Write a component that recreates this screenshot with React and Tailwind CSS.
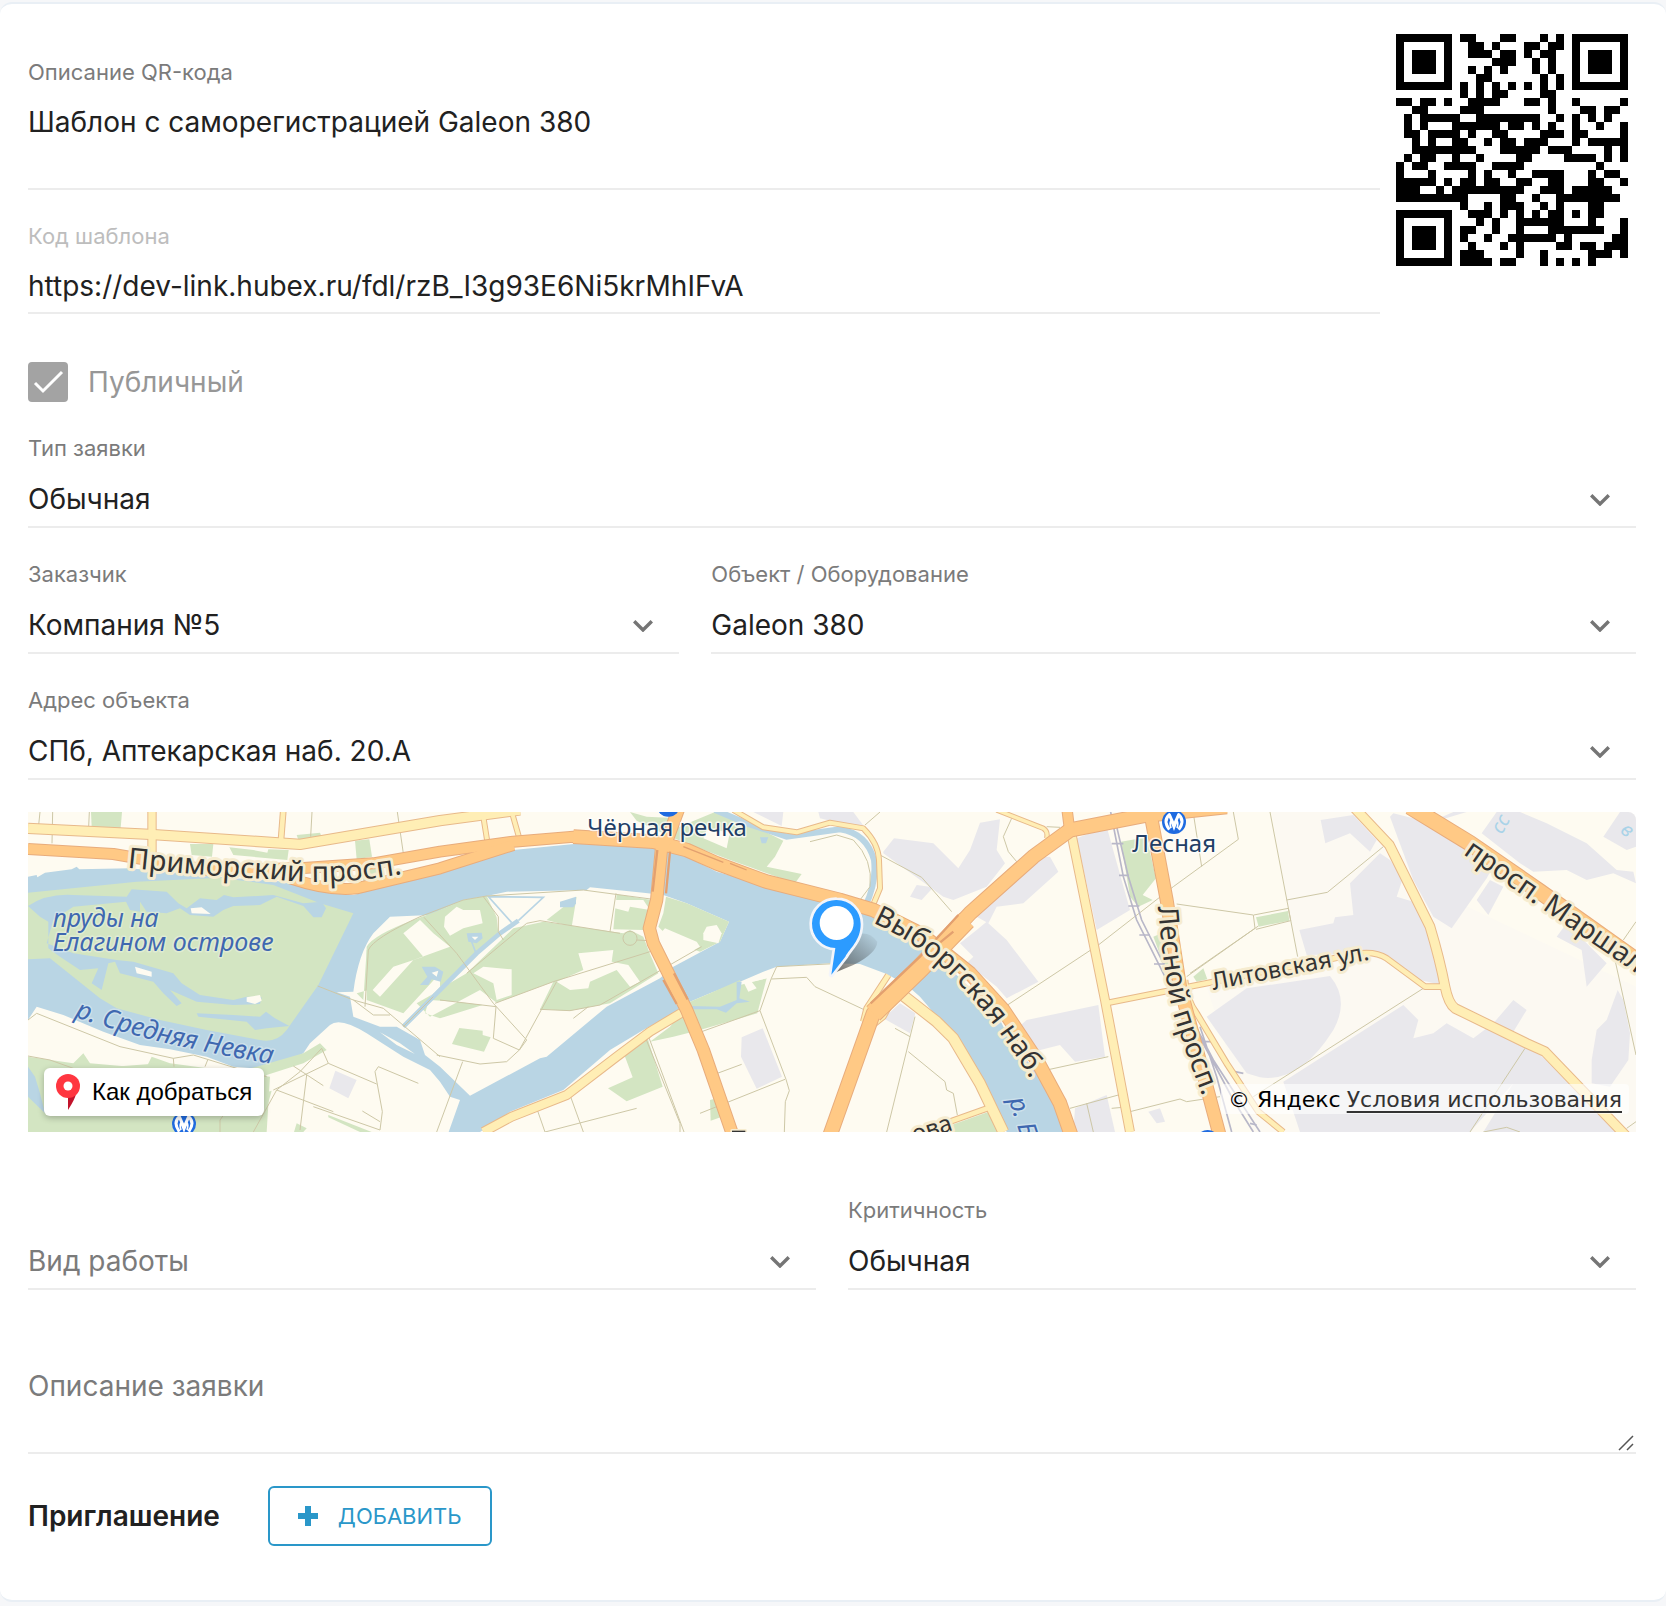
import React from "react";

const QR_SIZE = 29;

function gfMul(a, b) {
  let z = 0;
  for (let i = 7; i >= 0; i--) {
    z = (z << 1) ^ ((z >> 7) * 0x11d);
    z ^= ((b >> i) & 1) * a;
  }
  return z;
}

// Version 3, level L, byte mode, mask 6.
function qrMatrix(text) {
  const size = QR_SIZE;
  const dataLen = 55;
  const ecLen = 15;
  const bits = [];
  const push = (v, n) => {
    for (let i = n - 1; i >= 0; i--) bits.push((v >> i) & 1);
  };
  push(4, 4);
  push(text.length, 8);
  for (const ch of text) push(ch.charCodeAt(0), 8);
  push(0, 4);
  const data = [];
  for (let i = 0; i < bits.length; i += 8) data.push(parseInt(bits.slice(i, i + 8).join(""), 2));
  for (let p = 0xec; data.length < dataLen; p ^= 0xec ^ 0x11) data.push(p);

  const gen = new Array(ecLen).fill(0);
  gen[ecLen - 1] = 1;
  let root = 1;
  for (let i = 0; i < ecLen; i++) {
    for (let j = 0; j < ecLen; j++) {
      gen[j] = gfMul(gen[j], root);
      if (j + 1 < ecLen) gen[j] ^= gen[j + 1];
    }
    root = gfMul(root, 2);
  }
  const ec = new Array(ecLen).fill(0);
  for (const b of data) {
    const f = b ^ ec.shift();
    ec.push(0);
    gen.forEach((c, i) => (ec[i] ^= gfMul(c, f)));
  }
  const all = data.concat(ec);

  const m = Array.from({ length: size }, () => new Array(size).fill(0));
  const fixed = Array.from({ length: size }, () => new Array(size).fill(false));
  const set = (x, y, v) => {
    if (x < 0 || y < 0 || x >= size || y >= size) return;
    m[y][x] = v ? 1 : 0;
    fixed[y][x] = true;
  };
  for (let i = 0; i < size; i++) {
    set(6, i, i % 2 === 0);
    set(i, 6, i % 2 === 0);
  }
  for (const [cx, cy] of [[3, 3], [size - 4, 3], [3, size - 4]])
    for (let dy = -4; dy <= 4; dy++)
      for (let dx = -4; dx <= 4; dx++) {
        const d = Math.max(Math.abs(dx), Math.abs(dy));
        set(cx + dx, cy + dy, d !== 2 && d !== 4);
      }
  for (let dy = -2; dy <= 2; dy++)
    for (let dx = -2; dx <= 2; dx++) set(22 + dx, 22 + dy, Math.max(Math.abs(dx), Math.abs(dy)) !== 1);

  const format = 0b110110001000001;
  const bit = (i) => (format >> i) & 1;
  for (let i = 0; i <= 5; i++) set(8, i, bit(i));
  set(8, 7, bit(6));
  set(8, 8, bit(7));
  set(7, 8, bit(8));
  for (let i = 9; i < 15; i++) set(14 - i, 8, bit(i));
  for (let i = 0; i < 8; i++) set(size - 1 - i, 8, bit(i));
  for (let i = 8; i < 15; i++) set(8, size - 15 + i, bit(i));
  set(8, size - 8, 1);

  let k = 0;
  for (let right = size - 1; right >= 1; right -= 2) {
    if (right === 6) right = 5;
    for (let v = 0; v < size; v++)
      for (let j = 0; j < 2; j++) {
        const x = right - j;
        const y = ((right + 1) & 2) === 0 ? size - 1 - v : v;
        if (fixed[y][x]) continue;
        const b = k < all.length * 8 ? (all[k >> 3] >> (7 - (k & 7))) & 1 : 0;
        k++;
        m[y][x] = b ^ ((((x * y) % 2) + ((x * y) % 3)) % 2 === 0 ? 1 : 0);
      }
  }
  return m;
}

function QrCode({ text }) {
  const d = qrMatrix(text)
    .map((row, y) => row.map((v, x) => (v ? `M${x} ${y}h1v1h-1z` : "")).join(""))
    .join("");
  return (
    <svg viewBox="0 0 29 29" shapeRendering="crispEdges" className="size-[232px]" role="img" aria-label="QR-код">
      <path d={d} />
    </svg>
  );
}

const LABEL = "block h-7 text-[22px] leading-7 text-[#7b7b7b]";
const VALUE =
  "block w-full rounded-none border-b-2 border-[#ececec] bg-transparent text-[28px] leading-9 outline-none";

function TextField({ id, label, muted, children }) {
  return (
    <div>
      <label htmlFor={id} className={muted ? "block h-7 text-[22px] leading-7 text-[#bdbdbd]" : LABEL}>
        {label}
      </label>
      {children}
    </div>
  );
}

function SelectField({ id, label, value, placeholder, className = "" }) {
  return (
    <div className={className}>
      {placeholder ? <div className="h-7" /> : (
        <label htmlFor={id} className={LABEL}>
          {label}
        </label>
      )}
      <div className="relative mt-[18px]">
        <select
          id={id}
          aria-label={placeholder ? value : undefined}
          className={
            VALUE + " h-12 appearance-none pb-2 pr-16 " + (placeholder ? "text-[#7b7b7b]" : "text-[#212121]")
          }
        >
          <option>{value}</option>
        </select>
        <svg
          viewBox="0 0 20 12"
          className="pointer-events-none absolute right-[26px] top-3.5 h-3 w-5 fill-none stroke-[#757575]"
          strokeWidth="3.4"
        >
          <path d="M1.2 1.2 10 10l8.8-8.8" />
        </svg>
      </div>
    </div>
  );
}

const PARKS = [
  "M213 36H306L302 85L215 80z",
  "M510 132H580L576 170L515 165z",
  "M628 142L700 150L742 158L745 148L806 150L802 180L640 165z",
  "M1005 122L1048 118L1056 170L1010 178z",
  "M1025 205L1090 198L1080 235L1030 245z",
  "M830 105L900 98L905 110L835 120z",
  "M1040 440Q1060 405 1180 360L1260 330L1330 300L1400 288L1430 352L1435 400L1230 590L1215 640L1260 655L1388 615L1310 605L1230 600L1245 575L1340 520L1480 385L1570 365L1810 400L1830 390L1870 410L1890 462L1915 520L1770 610L1650 632L1560 628L1600 545L1430 608L1380 570L1230 650L1190 610L1260 570V520L1150 640L1040 600z",
  "M1010 580L1030 600L1040 450L1120 405L1150 390L1260 330V430L1110 520L1080 560z",
  "M1580 360L1670 290L1655 380z",
  "M1790 283L1895 300L1870 390L1780 388z",
  "M2000 310L1938 290L1930 340L1915 380L1935 400L2000 440L2040 455L2100 425L2127 365z",
  "M1318 684L1388 692V705L1412 712L1392 755L1296 732z",
  "M1812 762L1882 712L1928 860L1820 904L1764 865L1838 832z",
  "M2010 605L2070 580L2160 540V555L2240 535L2212 640L2040 690L1960 710L1890 725L1950 680z",
  "M2070 900L2090 895L2106 950L2072 962z",
  "M1830 36L1880 50L1975 55L1950 110L1850 62z",
  "M2085 36H2115L2290 122L2265 170L2240 200L2345 222L2325 250L2200 205L2130 180L1950 110L1955 90z",
  "M3303 125L3380 112L3408 235L3368 285L3398 300L3355 320L3330 290z",
  "M3400 410L3435 395L3450 500L3430 490z",
  "M3520 530L3550 505L3562 538L3530 545z",
  "M3708 352L3804 333L3808 362L3716 380z",
  "M2780 980L2915 932L2950 996H2785z",
  "M24 770L160 790L190 760L210 790L330 800L380 800L395 770L450 790L750 830L740 996H24z",
  "M24 820L420 790L640 820L850 760L900 730L920 750L850 790L740 825L730 840L24 840z",
  "M730 880L755 872L720 996L670 970z",
  "M830 970L860 985L850 996H822z",
  "M925 945L1055 996H1020L925 952z",
];

const INDUSTRY = [
  "M946 812L1010 840L985 895L928 865z",
  "M1668 455L1695 410L1770 420L1775 455L1740 458z",
  "M2165 712L2228 685L2286 830L2210 866L2163 770z",
  "M2200 36H2290L2285 78z",
  "M2395 36H2500L2540 90L2400 55z",
  "M2590 155L2622 115L2740 130L2815 205L2850 150L2880 68L2940 58L2930 150L2955 190L2900 260L2800 300L2770 290L2590 160z",
  "M2670 290L2690 255L2740 262L2705 300z",
  "M2850 310L3000 175L3090 170L3115 215L3010 310L2930 320L2905 370L2870 350z",
  "M2820 430L2870 390L2900 365L2960 420L3055 545L2960 595L2930 560L2840 490L2860 470z",
  "M3170 115L3260 80L3330 330L3230 390z",
  "M2985 690L3020 660L3235 615L3255 770L3165 785L3120 735L3040 755z",
  "M3165 925L3260 885L3285 996H3160z",
  "M2590 655L2640 610L2686 640L2670 700z",
  "M3385 935L3420 925L3435 965L3410 970z",
  "M3560 650L3680 565L3930 528Q3990 600 3940 690Q3840 850 3720 832L3680 820z",
  "M3790 845L4150 615L4195 660L4180 715L4240 700L4280 670L4360 715L4420 670L4480 600L4520 630L4480 695L4540 745L4640 840L4750 940L4800 996H4390L4480 850L4350 996H3840z",
  "M3838 390L3940 370L3945 352L4000 345L3990 250L4080 160L4110 180L4150 230L4130 290L4195 310L4250 470L4265 555L4200 540L4090 460L3860 465z",
  "M3902 60L4000 45L4070 120L4050 155L3990 100L3916 130z",
  "M4110 50L4120 40L4200 60L4430 180L4400 235L4295 385L4240 350L4180 240z",
  "M4385 100L4430 36H4500L4580 70L4700 130L4790 210L4840 215L4848 250L4780 220L4700 240L4640 210L4540 215L4500 190z",
  "M4750 110L4800 36H4848V140L4820 150z",
  "M4370 300L4410 240L4450 260L4405 345z",
  "M4610 410L4640 370L4760 490L4700 560L4685 450z",
  "M4715 780L4730 690L4760 660L4793 570L4810 600L4830 700L4825 780L4770 860L4715 850z",
  "M4300 36H4340L4210 75z",
];

const PATHS = [
  "M60 36L56 75M98 36L96 130M208 36L206 80M876 36L872 110M1132 36L1150 160",
  "M24 660L50 640L300 740L460 775L520 765L650 805L740 830M460 775L462 800M563 780L555 800M24 768L90 780L160 805",
  "M820 798L910 857M760 870L925 790L1070 852M925 790L905 745L840 815L770 870L700 996M770 870L940 935M860 825L840 990M880 920L1080 990L1087 935L1065 815L1075 800L1195 850M1027 933L1080 965M600 996V960L650 890",
  "M893 558L1000 600L1060 645L1110 645M1000 600L1090 625L1260 770M1150 680L1240 590M1035 620L1045 450Q1060 415 1200 350L1330 300L1400 288L1690 270L1900 298M1212 352L1310 460L1420 610L1520 720L1498 750L1420 715L1428 620L1260 600M1498 750L1460 785L1380 792L1250 765M1328 785L1250 996M1498 750L1610 545M1425 610L1600 545L1890 455M1340 520L1520 370L1560 362L1800 400M1560 628L1650 632L1740 615L2045 440M1770 395L1788 280M1390 290L1435 350V395L1450 420M1660 655L1705 620M1850 925L1575 996M1650 885L1690 996M1552 930L1575 996M1876 712L1980 970V996M1885 708L1992 996M2045 695L2220 632M2092 820L2165 793M2040 940L2295 838M2254 535L2220 632L2298 838L2308 872L2296 905L2293 996M2254 535L2270 500L2460 490M2254 537L2360 532L2385 560L2530 628M2370 125L2450 105L2500 120Q2560 180 2550 260L2520 300",
  "M2535 75L2580 36M2580 165L2705 232L2795 335M2975 55L2950 110L2965 155L2990 185M3080 80L3120 82M2955 620L3235 435L3460 260L3655 118L3640 36M3520 40L3545 200M3470 312L3700 345L3705 385L3500 530M3715 378L3510 520M3750 36L3833 470M3800 300L3922 277L4090 140M3701 345L3805 325L3812 362L3708 388M3080 810L3265 770M3150 925L3295 885M3275 925L3330 920M2665 755L2775 845L2780 870L2800 880L2812 945M2685 650L2600 996M2625 685L2670 710M3330 935L3480 897L3500 905L3600 890M3200 910L3220 996M3700 890L4210 565M4350 996L4515 745M4785 480L4848 765M4810 420L4848 365M4390 996L4460 982L4500 996M4820 985L4848 965",
];

const YELLOW = [
  { d: "M24 85L390 103L840 133L1260 62L1500 30", w: 28 },
  { d: "M396 30V160", w: 22 },
  { d: "M790 30L783 120", w: 14 },
  { d: "M1390 50L1402 125M1478 45L1498 115", w: 12 },
  { d: "M1390 996L1475 950L1640 885L1790 770L1890 695L1990 635", w: 24 },
  { d: "M2140 30L2230 82L2330 97L2430 68L2530 85Q2575 130 2577 180L2580 265L2555 325", w: 12 },
  { d: "M2930 30L3070 85Q3085 95 3080 115", w: 10 },
  { d: "M3155 105L3255 600L3330 996", w: 24 },
  { d: "M2530 665L2540 625L2605 525M2640 560L2590 650L2540 690", w: 14 },
  { d: "M2635 575L2750 665L2800 715L2880 850L2950 996", w: 30 },
  { d: "M2790 965L2910 922", w: 14 },
  { d: "M3265 608L3430 575L3560 550L3680 525L4020 460Q4070 455 4100 475L4215 560H4265", w: 14 },
  { d: "M3495 540Q3500 600 3530 640L3620 790L3715 935L3790 996", w: 14 },
  { d: "M4000 20L4108 135L4230 380Q4260 480 4275 560Q4285 610 4305 625L4520 730L4575 755L4820 1010", w: 26 },
];

const ORANGE = [
  { d: "M24 147L280 162L560 210L840 205L1060 190L1260 155L1480 125L1660 110L1900 122", w: 30 },
  { d: "M810 235Q930 275 1010 265L1260 205L1480 135", w: 30 },
  { d: "M1660 110L1900 125L2000 150L2090 190L2240 245L2460 300L2560 330L2700 400L2850 520L2950 630L3050 780L3120 910L3155 1010", w: 38 },
  { d: "M1978 20L1945 110L1925 140L1910 300L1888 385L1900 430L1965 560L2000 630L2050 750L2140 1010", w: 34 },
  { d: "M2425 1020L2560 640L2690 510L2850 340L3040 170L3150 90L3380 45L3620 20", w: 40 },
  { d: "M2560 640L2700 505L2840 360", w: 54 },
  { d: "M3140 20L3150 100", w: 28 },
  { d: "M3395 60L3440 300L3480 560L3600 1010", w: 36 },
  { d: "M4170 20L4350 130L4560 275L4848 480", w: 44 },
];

function Roads({ items, fill, edge }) {
  return (
    <g fill="none" strokeLinejoin="round">
      {items.map((r) => (
        <path key={r.d} d={r.d} stroke={edge} strokeWidth={r.w + 6} />
      ))}
      {items.map((r) => (
        <path key={r.d} d={r.d} stroke={fill} strokeWidth={r.w} />
      ))}
    </g>
  );
}

const STREET_LABELS = [
  { id: "primorsky", d: "M322 203Q560 228 760 238Q950 262 1200 212", text: "Приморский просп.", size: 86 },
  { id: "vyborgskaya", d: "M2558 368Q2736 450 2856 595Q2956 705 3070 900", text: "Выборгская наб.", size: 84 },
  { id: "lesnoy", d: "M3414 320Q3434 560 3466 660Q3500 770 3580 970", text: "Лесной просп.", size: 84 },
  { id: "litovskaya", d: "M3580 570L4080 473", text: "Литовская ул.", size: 72 },
  { id: "marshala", d: "M4328 162L4576 334L4900 555", text: "просп. Маршала", size: 84 },
];

function Metro({ x, y }) {
  return (
    <g transform={`translate(${x} ${y})`}>
      <circle r="36" fill="#1f6be0" />
      <path
        d="M-14 23Q-34 -4 -14 -22L0 10L14 -22Q34 -4 14 23"
        fill="none"
        stroke="#fff"
        strokeWidth="9"
        strokeLinejoin="round"
      />
      <path d="M-9 18Q-14 2 -9 -4L0 20L9 -4Q14 2 9 18" fill="none" stroke="#fff" strokeWidth="5" />
    </g>
  );
}

function MapDrawing() {
  return (
    <svg
      viewBox="24 36 4824 960"
      preserveAspectRatio="xMidYMid slice"
      className="block h-full w-full font-['Noto_Sans',sans-serif]"
      role="img"
      aria-label="Карта"
    >
      <defs>
        <linearGradient id="pin-shadow" x1="0" y1="1" x2="1" y2="0">
          <stop offset="0" stopColor="#333" stopOpacity=".75" />
          <stop offset="1" stopColor="#333" stopOpacity="0" />
        </linearGradient>
      </defs>
      <rect x="24" y="36" width="4824" height="960" fill="#fefbf1" />
      <path d="M3755 36L4000 36L4300 300L4848 560V996H3700L3560 560L3830 470z" fill="#fcf9f2" />
      <g fill="#e9e8ec">
        {INDUSTRY.map((d) => (
          <path key={d} d={d} />
        ))}
      </g>
      <path
        fill="#b9d5e4"
        d="M24 230L50 225L52 232L75 218L155 208L170 200L178 208L330 205L640 235L760 240L930 280L1000 285L1260 215L1480 150L1700 128L1960 150L2090 215L2250 260L2400 300L2560 325L2730 440L2810 525L2930 640L2960 700L3050 820L3110 930L3140 996H2960L2910 880L2810 720L2700 590L2660 555L2600 522L2520 492L2430 490L2270 500L2230 515L2160 545L2070 580L2010 605L1990 625L1870 690L1770 750L1630 870L1470 935L1380 996H1286L1320 900L1290 890L1260 845L1230 810L1150 770L1040 700Q960 650 930 675L870 730L850 760L760 810L640 800L560 770L450 748L360 735L250 695L130 645L50 620L24 660z"
      />
      <path
        fill="#fefbf1"
        d="M1350 887L1560 775L1580 770L1760 620L1920 535L1960 500L2100 425L2127 365L2000 310L1930 285L1870 278L1710 262L1700 270L1460 275L1400 288L1330 300L1230 345L1110 350L1060 400Q1015 460 1000 575L950 577L990 590L1000 650L1080 680L1130 680L1200 720L1215 765L1260 800z"
      />
      <g fill="#d3e5c2">
        <path d="M24 278L350 245L600 233L760 255L900 310L1000 340L895 555L800 690Q770 730 720 720L560 690L420 660L290 625L240 595L90 475L24 478z" />
        {PARKS.map((d) => (
          <path key={d} d={d} />
        ))}
      </g>
      <g fill="#fefbf1">
        <path d="M1150 400L1200 360L1240 400L1290 440L1180 480L1080 590L1058 570L1120 500L1210 470z" />
        <path d="M1275 350L1310 320L1330 330L1380 330L1388 370L1330 385L1290 407L1272 380z" />
        <path d="M1390 500L1475 508V585L1430 600L1420 550L1360 520z" />
        <path d="M1675 460L1780 450L1775 485L1825 495L1860 545L1830 560L1790 510L1710 545L1705 565L1650 570L1610 545L1690 510z" />
        <path d="M1935 385L2030 425L2040 440L1930 500L1895 430z" />
        <path d="M2050 400L2060 380L2090 375L2105 400L2095 430L2050 420z" />
        <path d="M1780 300L1870 300L1890 330L1830 320L1825 335L1785 325z" />
        <path d="M2060 90L2130 95L2120 145L2050 115z" />
        <path d="M2170 545L2185 575L2210 565L2195 545L2240 535L2235 520z" />
      </g>
      <g fill="#b9d5e4">
        <path d="M24 318Q80 280 160 285L320 290L335 268L440 275L475 310L500 325L540 295L590 300L612 285L640 292L760 285L850 310L905 305L918 325L905 352H880L850 318L770 290L720 315L640 318L610 330L580 350L510 345L480 325L440 340L380 335L360 305V335L330 330L318 305L160 320L100 360L80 430L160 460L290 480L340 485L460 520L485 550L540 585L640 600L680 590L725 592L720 612L640 615L530 605L450 570L485 610L470 618L430 580L400 545L300 520L285 485L265 490L245 570L215 550L235 505L180 510L120 470L85 445V365L60 350z" />
        <path d="M530 640L640 645L720 650L738 635L765 655L808 678L740 685L705 690L680 665L535 650z" />
        <path d="M1205 500L1245 500L1270 515L1262 545L1235 538L1225 555H1200L1222 530zM1340 400L1385 398L1388 415L1370 430L1345 425z" />
        <path d="M1620 305L1668 290V310L1660 322H1620z" />
        <path d="M2220 112L2245 112L2238 130H2225z" />
        <path d="M2012 618L2100 620L2150 600V545L2165 545L2158 595L2190 605L2150 610L2118 638L2090 628L2020 628z" />
        <path d="M24 800L45 830L60 880L75 940L24 890z" />
      </g>
      <g fill="none" stroke="#b9d5e4">
        <path d="M1150 680L1250 580L1370 460L1440 400L1495 362" strokeWidth="14" />
        <path d="M1475 368L1405 290L1570 292L1495 362M1368 460L1355 425" strokeWidth="5" />
        <path d="M2085 30L2180 70L2300 110L2460 88Q2540 100 2562 180Q2570 250 2535 320" strokeWidth="18" />
      </g>
      <g fill="#fefbf1">
        <path d="M512 325L545 322L572 342L515 340zM345 500L395 515V530L350 520zM680 592L720 585L725 602L705 612L680 605z" />
        <path d="M1080 697L1140 730L1185 762L1130 735zM1235 518L1255 512L1250 530zM1355 410H1375L1365 420z" />
      </g>
      <g fill="none" stroke="#cdc7a6" strokeWidth="3">
        {PATHS.map((d) => (
          <path key={d} d={d} />
        ))}
        <circle cx="1830" cy="415" r="21" />
        <path d="M1851 420L1885 422" />
      </g>
      <g fill="none" stroke="#b8b7c8" strokeWidth="5">
        <path d="M3272 36L3310 230L3350 360L3440 540L3560 750L3640 900L3700 996M3290 80L3325 230L3365 360L3450 530L3580 780L3720 996M3540 680L3590 830L3635 996" />
        <path d="M3275 131H3310M3297 226H3327M3325 318H3358M3358 405H3390M3402 492H3435M3495 640H3530M3545 725H3575M3645 815L3670 820M3690 970L3710 975" />
      </g>
      <Roads items={YELLOW} fill="#ffeeb5" edge="#e8b98a" />
      <Roads items={ORANGE} fill="#ffc985" edge="#e8ac7c" />
      <g fill="none" stroke="#e3a06f" strokeWidth="7">
        <path d="M1898 275L1912 150M1938 280L1950 155M1930 540L1970 612M1962 520L2003 598M2552 610L2700 470L2815 345M2745 440L2800 395" />
        <path d="M1990 140L2110 187M2130 190L2180 210" strokeWidth="4" />
      </g>
      <circle cx="1945" cy="14" r="36" fill="#1f6be0" />
      <circle cx="3563" cy="1026" r="36" fill="#1f6be0" />
      <Metro x={3462} y={66} />
      <Metro x={492} y={972} />
      <g fill="#a9d3e8" fontSize="60" fontStyle="italic">
        <text transform="translate(4445 105) rotate(-60)">сс</text>
        <text transform="translate(4798 95) rotate(40)">в</text>
      </g>
      <g className="[paint-order:stroke]" stroke="#fff" strokeOpacity=".75" strokeWidth="9" strokeLinejoin="round">
        <g fill="#223e66" fontSize="72">
          <text x="1702" y="108">Чёрная речка</text>
          <text x="3337" y="157">Лесная</text>
        </g>
        <g fill="#3f68b0" fontSize="75" fontStyle="italic" strokeOpacity=".3">
          <text x="98" y="380">пруды на</text>
          <text x="98" y="454">Елагином острове</text>
          <path id="label-nevka" d="M163 650Q420 740 820 802" fill="none" stroke="none" />
          <text fontSize="78">
            <textPath href="#label-nevka">р. Средняя Невка</textPath>
          </text>
          <text transform="translate(2966 900) rotate(72)">р. Большая</text>
        </g>
      </g>
      <g
        className="[paint-order:stroke]"
        fill="#333"
        stroke="#f6ecd0"
        strokeWidth="18"
        strokeLinejoin="round"
      >
        {STREET_LABELS.map((l) => (
          <React.Fragment key={l.id}>
            <path id={"label-" + l.id} d={l.d} fill="none" stroke="none" />
            <text fontSize={l.size}>
              <textPath href={"#label-" + l.id}>{l.text}</textPath>
            </text>
          </React.Fragment>
        ))}
        <text fontSize="72" transform="translate(2684 1028) rotate(-18)">
          ова
        </text>
        <path d="M2136 992H2176V1010H2136z" strokeWidth="10" />
      </g>
      <path d="M2435 522L2510 405Q2545 390 2572 425Q2570 460 2500 495z" fill="url(#pin-shadow)" />
      <path
        d="M2450 300a72 72 0 0 1 72 72c0 50-32 72-46 98L2434 524L2446 444A72 72 0 0 1 2450 300z"
        fill="#2c9bff"
        stroke="#f3f5fa"
        strokeWidth="16"
        className="[paint-order:stroke]"
        strokeLinejoin="round"
      />
      <circle cx="2450" cy="369" r="51" fill="#fff" />
    </svg>
  );
}

function MapPanel() {
  return (
    <div className="relative mt-8 h-80 overflow-hidden rounded-tr-lg">
      <MapDrawing />
      <button
        type="button"
        className="absolute bottom-4 left-4 flex h-12 items-center gap-3 rounded-md bg-white pl-3 pr-3 font-['Liberation_Sans',sans-serif] text-2xl text-black shadow-[0_2px_6px_rgba(0,0,0,0.25)]"
      >
        <svg viewBox="0 0 24 36" className="h-9 w-6">
          <path d="M12 22L20 20Q19 25 12 36z" fill="#c2132b" />
          <circle cx="12" cy="12" r="12" fill="#ff3640" />
          <circle cx="12" cy="12" r="4.5" fill="#fff" />
        </svg>
        Как добраться
      </button>
      <div className="absolute bottom-[18px] right-[7px] flex h-[30px] items-center gap-1.5 rounded bg-white/60 px-[7px] font-['DejaVu_Sans',sans-serif] text-[22px] text-black">
        <span>© Яндекс</span>
        <a href="#terms" className="text-[#333] underline decoration-2 underline-offset-4">
          Условия использования
        </a>
      </div>
    </div>
  );
}

export default function App() {
  const link = "https://dev-link.hubex.ru/fdl/rzB_I3g93E6Ni5krMhIFvA";
  return (
    <div className="bg-[#f6f7f9] pb-1 pt-0.5 font-['Inter',sans-serif] text-[#212121]">
      <form className="rounded-xl border-y-2 border-[#e9eff5] bg-white pb-[54px] pl-7 pr-[30px] pt-[54px]">
        <div className="flex gap-4 pr-2">
          <div className="flex min-w-0 flex-1 flex-col gap-8">
            <TextField id="qr-description" label="Описание QR-кода">
              <textarea
                id="qr-description"
                className={VALUE + " mt-[18px] h-[86px] resize-none"}
                defaultValue="Шаблон с саморегистрацией Galeon 380"
              />
            </TextField>
            <TextField id="qr-link" label="Код шаблона" muted>
              <input id="qr-link" className={VALUE + " mt-[18px] h-[46px] pb-2"} defaultValue={link} readOnly />
            </TextField>
          </div>
          <div className="-mt-6 h-[232px] shrink-0">
            <QrCode text={link} />
          </div>
        </div>

        <label className="mt-12 flex w-fit items-center gap-5 text-[28px] leading-10 text-[#979797]">
          <span className="relative block size-10">
            <input type="checkbox" defaultChecked className="block size-10 appearance-none rounded bg-[#a3a3a3]" />
            <svg
              viewBox="0 0 40 40"
              className="pointer-events-none absolute inset-0 size-10 fill-none stroke-white"
              strokeWidth="3"
            >
              <path d="M7 21L15 29L34 10" />
            </svg>
          </span>
          Публичный
        </label>

        <SelectField id="type" className="mt-8" label="Тип заявки" value="Обычная" />

        <div className="mt-8 grid grid-cols-12 gap-x-8">
          <SelectField id="customer" className="col-span-5" label="Заказчик" value="Компания №5" />
          <SelectField id="object" className="col-span-7" label="Объект / Оборудование" value="Galeon 380" />
        </div>

        <SelectField id="address" className="mt-8" label="Адрес объекта" value="СПб, Аптекарская наб. 20.А" />

        <MapPanel />

        <div className="mt-16 grid grid-cols-2 gap-x-8">
          <SelectField id="work" value="Вид работы" placeholder />
          <SelectField id="priority" label="Критичность" value="Обычная" />
        </div>

        <div className="relative mt-[78px]">
          <textarea
            aria-label="Описание заявки"
            placeholder="Описание заявки"
            className={VALUE + " h-[86px] resize-none placeholder:text-[#7b7b7b]"}
          />
          <svg
            viewBox="0 0 16 16"
            className="pointer-events-none absolute bottom-[3px] right-0.5 size-4 fill-none stroke-[#555]"
            strokeWidth="1.5"
          >
            <path d="M1 15L15 1M9 15L15 9" />
          </svg>
        </div>

        <div className="mt-8 flex items-center gap-12">
          <h2 className="text-[28px] font-semibold leading-9">Приглашение</h2>
          <button
            type="button"
            className="flex h-15 items-center gap-5 rounded-md border-2 border-[#2a97c9] px-7 text-[22px] font-normal text-[#2a97c9]"
          >
            <svg viewBox="0 0 20 20" className="size-5 fill-[#2a97c9]">
              <path d="M7 0h6v7h7v6h-7v7H7v-7H0V7h7z" />
            </svg>
            ДОБАВИТЬ
          </button>
        </div>
      </form>
    </div>
  );
}
